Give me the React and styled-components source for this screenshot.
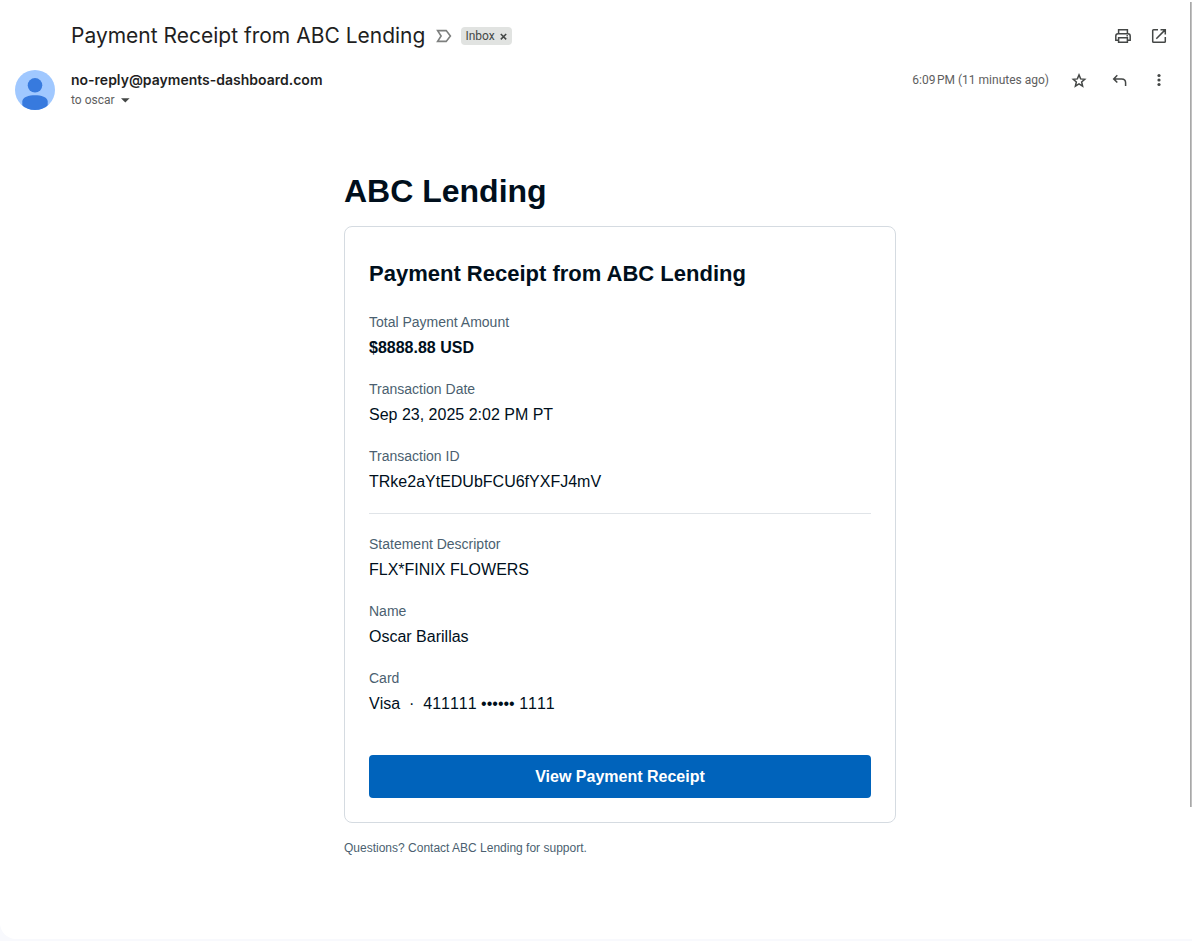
import React from 'react';
import styled, { createGlobalStyle } from 'styled-components';

const GlobalStyle = createGlobalStyle`
  * {
    box-sizing: border-box;
  }
  body {
    margin: 0;
    background: #f8f9fd;
    font-family: "Liberation Sans", Arial, sans-serif;
  }
`;

const Page = styled.div`
  display: flex;
  min-height: 100vh;
  padding-bottom: 2px;
`;

const Message = styled.main`
  flex: 1;
  background: #ffffff;
  border-radius: 0 0 0 16px;
  padding: 23px 21px 0 15px;
`;

const ScrollTrack = styled.div`
  width: 2px;
  padding-top: 2px;
  background: #ffffff;
`;

const ScrollThumb = styled.div`
  height: calc(100vh - 136px);
  background: #c1c1c1;
  border-left: 1px solid #a8a8a8;
`;

const SubjectRow = styled.div`
  display: flex;
  align-items: center;
  height: 26px;
  padding-left: 56px;
`;

const Subject = styled.h1`
  margin: 0 11px 0 0;
  color: #1f1f1f;
  font-family: Inter, sans-serif;
  font-size: 21px;
  font-weight: 400;
  line-height: 24px;
`;

const Chip = styled.span`
  display: flex;
  align-items: center;
  gap: 5px;
  height: 18px;
  margin-left: 9px;
  padding: 0 5px 0 4px;
  border-radius: 4px;
  background: #e1e3e1;
  color: #444746;
  font-family: Roboto, sans-serif;
  font-size: 12px;
`;

const IconButton = styled.button`
  display: flex;
  align-items: center;
  justify-content: center;
  padding: 0;
  border: none;
  background: none;
  color: #444746;
  cursor: pointer;
`;

const Actions = styled.div`
  display: flex;
  gap: ${(props) => props.$gap};
  margin-left: auto;
`;

const SenderRow = styled.div`
  display: flex;
  align-items: flex-start;
  margin-top: 21px;
`;

const SenderInfo = styled.div`
  margin-left: 16px;
  font-family: Roboto, sans-serif;
`;

const SenderName = styled.div`
  color: #1f1f1f;
  font-family: Inter, sans-serif;
  font-size: 14px;
  font-weight: 600;
  line-height: 20px;
`;

const Recipient = styled.div`
  display: flex;
  align-items: center;
  gap: 6px;
  color: #5e5e5e;
  font-size: 12px;
  line-height: 20px;
`;

const Meta = styled.div`
  display: flex;
  align-items: center;
  height: 20px;
  margin-left: auto;
`;

const Time = styled.span`
  margin-right: 20px;
  color: #5e5e5e;
  font-family: Roboto, sans-serif;
  font-size: 12px;
`;

const ReceiptArea = styled.div`
  padding-left: 56px;
`;

const Receipt = styled.article`
  max-width: 552px;
  margin: 61px auto 0;
`;

const Merchant = styled.h2`
  margin: 0 0 15px;
  color: #000f1c;
  font-size: 32px;
  font-weight: 700;
  line-height: 40px;
`;

const Card = styled.section`
  padding: 32px 24px 24px;
  border: 1px solid #d5dbe1;
  border-radius: 8px;
`;

const CardTitle = styled.h3`
  margin: 0 0 22px;
  color: #000f1c;
  font-size: 22px;
  font-weight: 700;
  line-height: 30px;
`;

const Details = styled.dl`
  display: flex;
  flex-direction: column;
  gap: 15px;
  margin: 0;
`;

const Label = styled.dt`
  color: #4b5f70;
  font-size: 14px;
  line-height: 22px;
`;

const Value = styled.dd`
  margin: 0;
  color: #000f1c;
  font-size: 16px;
  font-weight: ${(props) => (props.$strong ? 700 : 400)};
  font-kerning: ${(props) => (props.$digits ? 'none' : 'auto')};
  line-height: 30px;
  white-space: pre-wrap;
`;

const Divider = styled.hr`
  margin: 16px 0 19px;
  border: none;
  border-top: 1px solid #e0e4e8;
`;

const ReceiptLink = styled.a`
  display: block;
  margin-top: 36px;
  border-radius: 4px;
  background: #0063bb;
  color: #ffffff;
  font-size: 16px;
  font-weight: 700;
  line-height: 43px;
  text-align: center;
  text-decoration: none;
`;

const Support = styled.p`
  margin: 15px 0 0;
  color: #4b5f70;
  font-size: 12px;
  line-height: 20px;
`;

const paymentDetails = [
  { label: 'Total Payment Amount', value: '$8888.88 USD', strong: true },
  { label: 'Transaction Date', value: 'Sep 23, 2025 2:02 PM PT' },
  { label: 'Transaction ID', value: 'TRke2aYtEDUbFCU6fYXFJ4mV' },
];

const payerDetails = [
  { label: 'Statement Descriptor', value: 'FLX*FINIX FLOWERS' },
  { label: 'Name', value: 'Oscar Barillas' },
  { label: 'Card', value: 'Visa  ·  411111 •••••• 1111', digits: true },
];

const Icon = ({ children }) => (
  <svg width="20" height="20" viewBox="0 0 20 20" fill="none" stroke="currentColor" strokeWidth="1.5" aria-hidden="true">
    {children}
  </svg>
);

const Avatar = () => (
  <svg width="40" height="40" viewBox="0 0 40 40" aria-hidden="true">
    <clipPath id="avatar-clip">
      <circle cx="20" cy="20" r="20" />
    </clipPath>
    <g clipPath="url(#avatar-clip)">
      <rect width="40" height="40" fill="#a0c8ff" />
      <circle cx="20" cy="15.3" r="7.3" fill="#377ade" />
      <path d="M7.3 42V31.5C7.3 27 14 25.2 20 25.2S32.7 27 32.7 31.5V42z" fill="#377ade" />
    </g>
  </svg>
);

const DetailList = ({ items }) => (
  <Details>
    {items.map((item) => (
      <div key={item.label}>
        <Label>{item.label}</Label>
        <Value $strong={item.strong} $digits={item.digits}>{item.value}</Value>
      </div>
    ))}
  </Details>
);

export default function App() {
  return (
    <Page>
      <GlobalStyle />
      <Message>
        <SubjectRow>
          <Subject>Payment Receipt from ABC Lending</Subject>
          <IconButton aria-label="Mark as important">
            <svg width="16" height="14" viewBox="0 0 16 14" fill="none" stroke="#7d7f7e" strokeWidth="1.6">
              <path d="M1.6 1.6h8.6L14.4 7l-4.2 5.4H1.6L5.1 7z" />
            </svg>
          </IconButton>
          <Chip>
            Inbox
            <IconButton aria-label="Remove label Inbox">
              <svg width="7" height="8" viewBox="0 0 7 8" fill="none" stroke="currentColor" strokeWidth="1.5">
                <path d="M.8 2l5.4 5.4M6.2 2L.8 7.4" />
              </svg>
            </IconButton>
          </Chip>
          <Actions $gap="16px">
            <IconButton aria-label="Print">
              <Icon>
                <path d="M5.6 7V3.7h8.8V7M5.3 14.2H2.8V10c0-1.4.9-2.3 2.2-2.3h10c1.3 0 2.2.9 2.2 2.3v4.2h-2.5" />
                <path d="M5.6 11.7h8.8v4.6H5.6z" />
                <path d="M13.5 9.8h1.4" />
              </Icon>
            </IconButton>
            <IconButton aria-label="Open in new window">
              <Icon>
                <path d="M9 3.7H4.6c-.5 0-.9.4-.9.9v10.8c0 .5.4.9.9.9h10.8c.5 0 .9-.4.9-.9V11M11.5 3.7h4.8v4.8M16.1 3.9l-8.8 8.8" />
              </Icon>
            </IconButton>
          </Actions>
        </SubjectRow>

        <SenderRow>
          <Avatar />
          <SenderInfo>
            <SenderName>no-reply@payments-dashboard.com</SenderName>
            <Recipient>
              to oscar
              <IconButton aria-label="Show details">
                <svg width="9" height="5" viewBox="0 0 9 5" fill="currentColor">
                  <path d="M0 .2h8.6L4.3 4.6z" />
                </svg>
              </IconButton>
            </Recipient>
          </SenderInfo>
          <Meta>
            <Time>6:09{'\u202f'}PM (11 minutes ago)</Time>
            <Actions $gap="20px">
              <IconButton aria-label="Star">
                <Icon>
                  <path d="M10 4.9l1.65 4 4.1.35-3.1 2.75.95 4.15L10 13.95 6.4 16.15l.95-4.15-3.1-2.75 4.1-.35z" />
                </Icon>
              </IconButton>
              <IconButton aria-label="Reply">
                <Icon>
                  <path d="M8.3 5.3L4.7 8.9l3.6 3.6M4.7 8.9h8c2.4 0 3.9 1.5 3.9 3.8V16" />
                </Icon>
              </IconButton>
              <IconButton aria-label="More">
                <Icon>
                  <g fill="currentColor" stroke="none">
                    <circle cx="10" cy="5.5" r="1.6" />
                    <circle cx="10" cy="10" r="1.6" />
                    <circle cx="10" cy="14.5" r="1.6" />
                  </g>
                </Icon>
              </IconButton>
            </Actions>
          </Meta>
        </SenderRow>

        <ReceiptArea>
          <Receipt>
            <Merchant>ABC Lending</Merchant>
            <Card>
              <CardTitle>Payment Receipt from ABC Lending</CardTitle>
              <DetailList items={paymentDetails} />
              <Divider />
              <DetailList items={payerDetails} />
              <ReceiptLink href="#receipt">View Payment Receipt</ReceiptLink>
            </Card>
            <Support>Questions? Contact ABC Lending for support.</Support>
          </Receipt>
        </ReceiptArea>
      </Message>
      <ScrollTrack>
        <ScrollThumb />
      </ScrollTrack>
    </Page>
  );
}
